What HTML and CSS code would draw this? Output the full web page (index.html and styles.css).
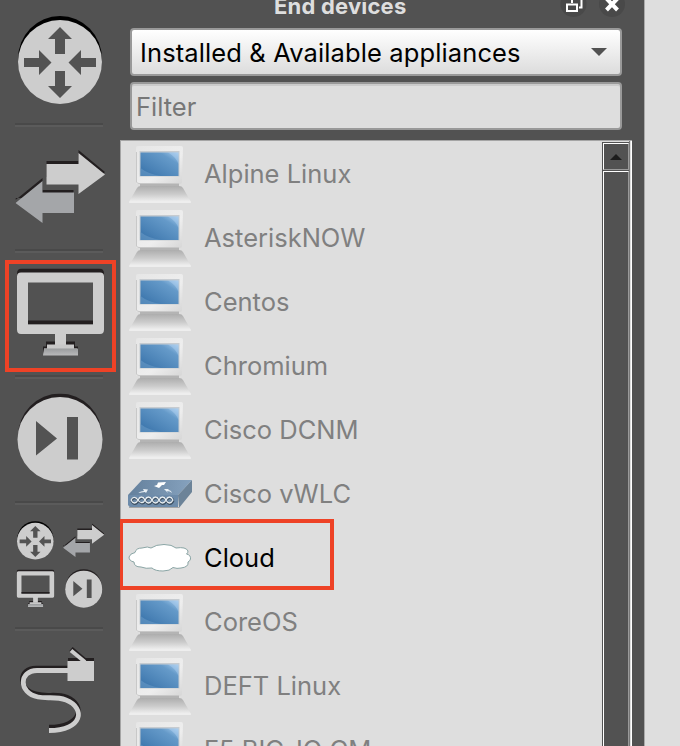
FILE: index.html
```html
<!DOCTYPE html>
<html lang="en">
<head>
<meta charset="utf-8">
<title>End devices</title>
<link rel="stylesheet" href="styles.css">
</head>
<body>
<svg class="defs" aria-hidden="true">
  <defs>
    <linearGradient id="screen" x1="0" y1="1" x2="1" y2="0"><stop offset="0" stop-color="#356fa7"/><stop offset=".3" stop-color="#4a82b6"/><stop offset=".75" stop-color="#659ac9"/><stop offset="1" stop-color="#a5cbed"/></linearGradient>
    <linearGradient id="base" x1="0" y1="0" x2="0" y2="1"><stop offset="0" stop-color="#adadad"/><stop offset=".5" stop-color="#cdcdcd"/><stop offset="1" stop-color="#f6f6f6"/></linearGradient>
    <linearGradient id="body" x1="0" y1="0" x2="1" y2="1"><stop offset="0" stop-color="#e6e6e6"/><stop offset=".6" stop-color="#eeeeee"/><stop offset="1" stop-color="#d6d6d6"/></linearGradient>
    <linearGradient id="top" x1="0" y1="0" x2="1" y2="0"><stop offset="0" stop-color="#64809c"/><stop offset="1" stop-color="#86a2be"/></linearGradient>
    <linearGradient id="foot" x1="0" y1="0" x2="0" y2="1"><stop offset="0" stop-color="#999b9d"/><stop offset="1" stop-color="#b9babb"/></linearGradient>
    <symbol id="pc" viewBox="0 0 64 64">
      <path d="M12 41H51V45H12Z" fill="#b4b4b4"/>
      <path d="M9 46Q10 44 13 44H51Q54 44 55 46L62.500 59V61H1.500V59Z" fill="url(#base)"/>
      <path d="M1.500 59H62.500V61H1.500Z" fill="#eee"/>
      <path d="M10 4H53Q55 4 55 6L54 40Q54 42 52 42H10Q8 42 8 40V6Q8 4 10 4Z" fill="url(#body)"/>
      <path d="M8.500 10V40Q9 41.500 11 41.500H51" fill="none" stroke="#c8c8c8"/>
      <path d="M11.500 9H51.500V34.500H11.500Z" fill="#c6cbd0"/>
      <path d="M12.500 10.500H50.500V34H12.500Z" fill="url(#screen)"/>
      <path d="M12.500 26Q20 32 33 34H12.500Z" fill="#6c9dc9" opacity=".55"/>
      <path d="M40 10.500H50.500V22Q48 15 40 10.500Z" fill="#b8d8f5" opacity=".4"/>
    </symbol>
    <symbol id="wlc" viewBox="0 0 64 64">
      <path d="M0 33 14 18H64L50 33Z" fill="url(#top)"/>
      <path d="M50 33 64 18V30L51 46Z" fill="#6c8398"/>
      <path d="M0 33H50V45.500H2L0 43Z" fill="#6d8baa"/>
      <path d="M1 45.500H51" stroke="#a5a5a5"/>
      <path d="M3 38C5 34 8 35 10 38S15 42 17 38S22 34 24 38S29 42 31 38S36 34 38 38S43 42 45 38M3 38C5 42 8 42 10 38S15 34 17 38S22 42 24 38S29 34 31 38S36 42 38 38S43 34 45 38" transform="translate(.4 .7)" fill="none" stroke="#3e5062" stroke-width="2.400"/>
      <path d="M3 38C5 34 8 35 10 38S15 42 17 38S22 34 24 38S29 42 31 38S36 34 38 38S43 42 45 38M3 38C5 42 8 42 10 38S15 34 17 38S22 42 24 38S29 34 31 38S36 42 38 38S43 34 45 38" fill="none" stroke="#e6edf2" stroke-width="1.300"/>
      <path d="M26 24 29 23 30 20.500 38 20 36 23 34 23 31 26Z" fill="#fff"/>
      <path d="M10 31Q13 29 16 29L15 27L20 27.500L18 31L17 30Z M44 31Q42 29 39 29L40 31L36 27L41 27L40 28Q43 28 44 31Z" fill="#e9f0f5"/>
    </symbol>
    <symbol id="cloud" viewBox="0 0 64 64">
      <path d="M7 26.500Q8 22 14 22Q20 20 23 22Q28 18.500 36 18.500Q44 18.500 48 22Q58 20.500 60 25Q60 27 58.500 28Q63 29 62.500 33Q62 35 60 36Q61 41 53 42Q49 43 45 41.500Q42 45 35 45Q27 45 24 42Q18 43 13 41Q6 41 6 36Q1 35 1 31Q2 27.500 7 26.500Z" fill="#fff" stroke="#8aa5a5"/>
    </symbol>
    <symbol id="router" viewBox="0 0 86 90">
      <ellipse cx="42" cy="43" rx="42" ry="43" fill="#000"/>
      <ellipse cx="42" cy="46" rx="42" ry="42" fill="#cdcdcd"/>
      <path d="M42 11 54 23H47V38H37V23H30ZM42 82 54 70H47V55H37V70H30ZM33.500 46.500 21 34V42H6V51H21V59ZM50.500 46.500 63 34V42H78V51H63V59Z" fill="#535353"/>
    </symbol>
    <symbol id="switch" viewBox="0 0 90 74">
      <path d="M31 11H63V0L89.500 22 84 27H31ZM0 50 27 28V40H58V48H0Z" fill="#231f20"/>
      <path d="M31 14H63V3L89.500 24.500 63 44V34.500H31Z" fill="#cdcdcd"/>
      <path d="M0 53 27 31V42.500H58.500V63H27V73Z" fill="#a4a6a9"/>
    </symbol>
    <symbol id="monitor" viewBox="0 0 87 88">
      <path d="M5 0H82Q87 0 87 5V12H0V5Q0 0 5 0Z" fill="#231f20"/>
      <path d="M29 73H58V78H61V84H26V78H29Z" fill="#231f20"/>
      <path fill-rule="evenodd" d="M4 4H83Q87 4 87 8V61Q87 65.500 83 65.500H49V77H38V65.500H4Q0 65.500 0 61V8Q0 4 4 4ZM11 14V56H76V14Z" fill="#cdcdcd"/>
      <path d="M11 52H76V55.500H11Z" fill="#231f20"/>
      <path d="M30 76H57V80H60V84H27V80H30Z" fill="#c8c8c8"/>
      <path d="M27 80H61V87H26Z" fill="url(#foot)"/>
    </symbol>
    <symbol id="skip" viewBox="0 0 86 90">
      <ellipse cx="43" cy="43" rx="42" ry="43" fill="#231f20"/>
      <ellipse cx="43" cy="46" rx="42.500" ry="42.500" fill="#cdcdcd"/>
      <path d="M19 27.500 40 45 19 62ZM50 23.500H61V66H50Z" fill="#535353"/>
    </symbol>
  </defs>
</svg>
<div class="app">
  <nav class="tools">
    <div class="tool first"><svg viewBox="0 0 120 123"><use href="#router" x="18" y="16" width="86" height="90"/></svg></div>
    <div class="tool"><svg viewBox="0 127 120 122"><use href="#switch" x="15.500" y="150" width="90" height="74"/></svg></div>
    <div class="tool selected"><svg viewBox="0 253 120 122"><use href="#monitor" x="17" y="268.500" width="87" height="88"/></svg></div>
    <div class="tool"><svg viewBox="0 379 120 122"><use href="#skip" x="17" y="393.500" width="86" height="90"/></svg></div>
    <div class="tool"><svg viewBox="0 505 120 122">
      <use href="#router" x="17" y="521" width="37.500" height="39.500"/>
      <use href="#switch" x="63" y="523.500" width="41.500" height="34"/>
      <use href="#monitor" x="16.500" y="569.500" width="38" height="38"/>
      <use href="#skip" x="65" y="569" width="37.500" height="39.500"/>
    </svg></div>
    <div class="tool last"><svg viewBox="0 631 120 115">
      <path d="M67.500 668H36C18 668 17 690 37 694C47 697 56 693 67 697C86 705 82 727 49 727" fill="none" stroke="#231f20" stroke-width="4.500"/>
      <path d="M68 658H94V668H68Z" fill="#231f20"/>
      <path d="M71 649 84 660" stroke="#231f20" stroke-width="5"/>
      <path d="M68 670.500H37C19 670.500 18 693 38 697C47 699 56 696 66 700C86 708 83 730.500 49 730.500" fill="none" stroke="#cdcdcd" stroke-width="4.800"/>
      <path d="M71 650.500 85 662" stroke="#cdcdcd" stroke-width="4"/>
      <path d="M67.500 661H94V681H67.500Z" fill="#cdcdcd"/>
    </svg></div>
  </nav>
  <main class="dock">
    <header class="titlebar">
      <h1>End devices</h1>
      <svg class="titlebtns" viewBox="560 0 68 20">
        <circle cx="573.500" cy="4" r="13" fill="#494949"/><circle cx="612" cy="4" r="13" fill="#494949"/>
        <path d="M567 4.500H577V11H567ZM572 3V0M581.500 0V7.500H579" fill="none" stroke="#fff" stroke-width="2"/>
        <path d="M606.500 -1.500 617.500 10M617.500 -1.500 606.500 10" stroke="#fff" stroke-width="4"/>
      </svg>
    </header>
    <div class="field combo"><span>Installed &amp; Available appliances</span><i class="caret"></i></div>
    <div class="field filter"><span>Filter</span></div>
    <section class="listbox">
      <ul class="list">
        <li><svg><use href="#pc"/></svg><span>Alpine Linux</span></li>
        <li><svg><use href="#pc"/></svg><span>AsteriskNOW</span></li>
        <li><svg><use href="#pc"/></svg><span>Centos</span></li>
        <li><svg><use href="#pc"/></svg><span>Chromium</span></li>
        <li><svg><use href="#pc"/></svg><span>Cisco DCNM</span></li>
        <li><svg><use href="#wlc"/></svg><span>Cisco vWLC</span></li>
        <li class="current"><svg><use href="#cloud"/></svg><span>Cloud</span></li>
        <li><svg><use href="#pc"/></svg><span>CoreOS</span></li>
        <li><svg><use href="#pc"/></svg><span>DEFT Linux</span></li>
        <li><svg><use href="#pc"/></svg><span>F5 BIG-IQ CM</span></li>
      </ul>
      <div class="scrollbar"><div class="up"><i></i></div><div class="thumb"></div></div>
    </section>
  </main>
  <aside class="canvas"></aside>
</div>
</body>
</html>
```
FILE: styles.css
```css
*, *::before, *::after { box-sizing: border-box; }
body {
  margin: 0;
  height: 746px;
  overflow: hidden;
  background: #525252;
  font-family: Inter, "Liberation Sans", sans-serif;
  font-size: 25.5px;
}
.defs { position: absolute; width: 0; height: 0; }
.app { display: flex; height: 746px; }

.tools { width: 120px; flex: none; display: flex; flex-direction: column; }
.tool { position: relative; height: 126px; flex: none; }
.tool svg { display: block; width: 120px; height: 122px; }
.tool.first { height: 127px; }
.tool.first svg { height: 123px; }
.tool.last { height: 115px; }
.tool.last svg { height: 115px; }
.tool:not(.last)::after {
  content: "";
  display: block;
  width: 88px;
  height: 4px;
  margin-left: 15px;
  border-top: 2px solid #494949;
  border-bottom: 2px solid #5b5b5b;
}
.tool.selected::before {
  content: "";
  position: absolute;
  left: 5px;
  top: 7px;
  width: 111px;
  height: 112px;
  border: 4px solid #ee4226;
}

.dock { width: 524px; flex: none; display: flex; flex-direction: column; }
.titlebar { height: 28px; flex: none; display: flex; justify-content: flex-end; overflow: hidden; }
.titlebar h1 {
  margin: -8px auto 0 154px;
  font-size: 22px;
  letter-spacing: .2px;
  line-height: 28px;
  font-weight: 700;
  color: #dedede;
  white-space: nowrap;
}
.titlebtns { width: 68px; height: 20px; margin-right: 16px; flex: none; }

.field {
  width: 492px;
  height: 48px;
  margin-left: 10px;
  flex: none;
  display: flex;
  align-items: center;
  border: 2px solid #999;
  border-radius: 4px;
}
.combo {
  justify-content: space-between;
  padding: 0 13px 0 8px;
  background: linear-gradient(#fff, #dcdcdc);
  color: #000;
  letter-spacing: .12px;
}
.caret { border: 8px solid transparent; border-top-color: #525252; border-bottom: 0; }
.filter {
  margin-top: 6px;
  padding-left: 4px;
  background: #dedede;
  color: #777;
  box-shadow: inset 0 2px #cbcbcb;
}

.listbox {
  width: 512px;
  height: 606px;
  margin-top: 10px;
  flex: none;
  display: flex;
  overflow: clip;
  overflow-clip-margin: 1px;
  background: #dedede;
  border: solid #a5a5a5;
  border-width: 1px 0 0 1px;
}
.list { flex: 1; margin: 0; padding: 1px 0 0 7px; list-style: none; color: #808080; }
.list li {
  position: relative;
  display: flex;
  align-items: center;
  gap: 12px;
  height: 64px;
  white-space: nowrap;
}
.list span { padding-bottom: 2px; }
.list svg { width: 64px; height: 64px; flex: none; }
.list .current { color: #000; }
.current::after {
  content: "";
  position: absolute;
  left: -9px;
  top: -7px;
  width: 215px;
  height: 71px;
  border: 4px solid #ee4226;
}

.scrollbar {
  width: 30px;
  padding: 1px 0 0;
  flex: none;
  display: flex;
  flex-direction: column;
  gap: 1px;
  border-right: 1px solid #fff;
  background: linear-gradient(#dedede 1px, #525252 1px);
  box-shadow: inset -1px 0 #dedede, inset -2px 0 #777;
}
.up, .thumb {
  width: 26px;
  margin-left: 1px;
  border: 1px solid #fff;
  border-right-color: #999;
  background: #525252;
}
.up {
  height: 27px;
  margin-top: 1px;
  display: flex;
  align-items: center;
  justify-content: center;
  border-bottom-color: #999;
}
.up i { border: 6px solid transparent; border-bottom-color: #1c1c1c; border-top: 0; }
.thumb { flex: 1; border-bottom: 0; }
.canvas { flex: 1; background: #dedede; border-left: 1px solid #aaa; }
```
